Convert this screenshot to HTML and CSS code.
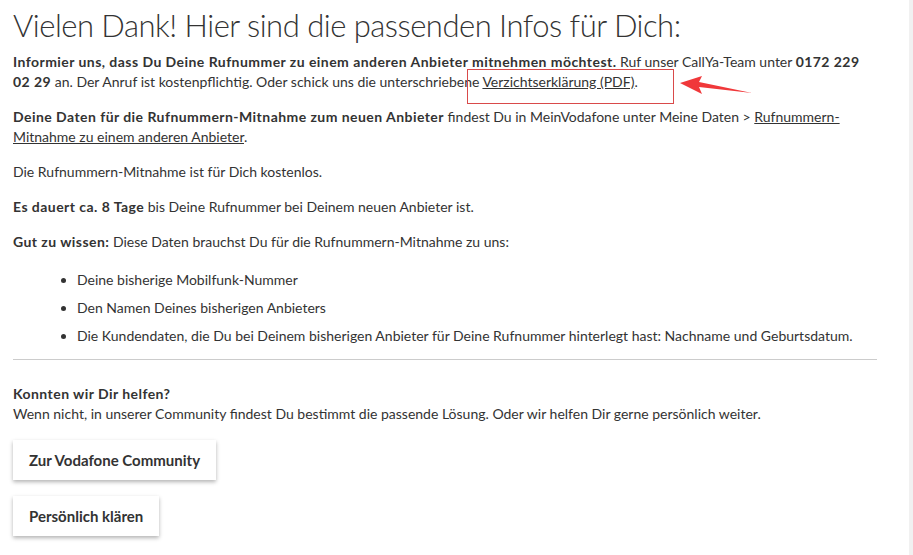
FILE: index.html
```html
<!DOCTYPE html>
<html>
<head>
    <meta charset="utf-8">
    <title>Rufnummern-Mitnahme</title>
<link rel="stylesheet" href="styles.css">
</head>
<body>
<div class="page">
    <div class="content">
        <h1>Vielen Dank! Hier sind die passenden Infos für Dich:</h1>
        <p><b>Informier uns, dass Du Deine Rufnummer zu einem anderen Anbieter mitnehmen möchtest.</b> Ruf unser CallYa-Team unter <b>0172 229 02 29</b> an. Der Anruf ist kostenpflichtig. Oder schick uns die unterschriebene <a href="#">Verzichtserklärung (PDF)</a>.</p>
        <p><b>Deine Daten für die Rufnummern-Mitnahme zum neuen Anbieter</b> findest Du in MeinVodafone unter Meine Daten &gt; <a href="#">Rufnummern-Mitnahme zu einem anderen Anbieter</a>.</p>
        <p>Die Rufnummern-Mitnahme ist für Dich kostenlos.</p>
        <p><b>Es dauert ca. 8 Tage</b> bis Deine Rufnummer bei Deinem neuen Anbieter ist.</p>
        <p><b>Gut zu wissen:</b> Diese Daten brauchst Du für die Rufnummern-Mitnahme zu uns:</p>
        <ul>
            <li>Deine bisherige Mobilfunk-Nummer</li>
            <li>Den Namen Deines bisherigen Anbieters</li>
            <li>Die Kundendaten, die Du bei Deinem bisherigen Anbieter für Deine Rufnummer hinterlegt hast: Nachname und Geburtsdatum.</li>
        </ul>
        <hr>
        <div class="help">
            <b>Konnten wir Dir helfen?</b><br>
            Wenn nicht, in unserer Community findest Du bestimmt die passende Lösung. Oder wir helfen Dir gerne persönlich weiter.
        </div>
        <div class="buttons">
            <a class="btn" href="#">Zur Vodafone Community</a>
            <a class="btn" href="#">Persönlich klären</a>
        </div>
    </div>
    <div class="scroll"></div>
</div>
<div class="mark-box"></div>
<svg class="mark-arrow" width="80" height="24" viewBox="0 0 80 24">
    <polygon points="0,7 22,0 19,6 72,17 19,11 22,18" fill="#f0383a"/>
</svg>
</body>
</html>
```

FILE: styles.css
```css
* {
    margin: 0;
    padding: 0;
}
body {
    font-family: Lato, "Open Sans", sans-serif;
    font-size: 14px;
    line-height: 20px;
    color: #333;
    background: #fff;
}
b {
    letter-spacing: 0.45px;
}
.page {
    display: flex;
    height: 555px;
}
.content {
    flex: 1;
    padding: 5px 32px 0 13px;
}
.scroll {
    width: 4px;
    background: #f1f1f1;
}
h1 {
    font-weight: 300;
    font-size: 31px;
    letter-spacing: -0.5px;
    line-height: 40px;
    margin-bottom: 7px;
}
p {
    margin-bottom: 15px;
}
a {
    color: #333;
    text-decoration: underline;
}
ul {
    margin: 18px 0 0 64px;
}
li {
    margin-bottom: 8px;
}
hr {
    border: 0;
    border-top: 1px solid #ccc;
    margin: 13px 0 24px;
}
.help {
    margin-bottom: 16px;
}
.buttons {
    display: flex;
    flex-direction: column;
    align-items: flex-start;
    gap: 16px;
}
.btn {
    display: block;
    height: 40px;
    line-height: 40px;
    padding: 0 16px;
    font-weight: bold;
    font-size: 15px;
    text-decoration: none;
    background: #fff;
    box-shadow: 0 2px 4px rgba(0, 0, 0, 0.3);
}
.mark-box {
    position: absolute;
    left: 467px;
    top: 69px;
    width: 205px;
    height: 33px;
    border: 1px solid #d94a4a;
}
.mark-arrow {
    position: absolute;
    left: 680px;
    top: 76px;
}
```
